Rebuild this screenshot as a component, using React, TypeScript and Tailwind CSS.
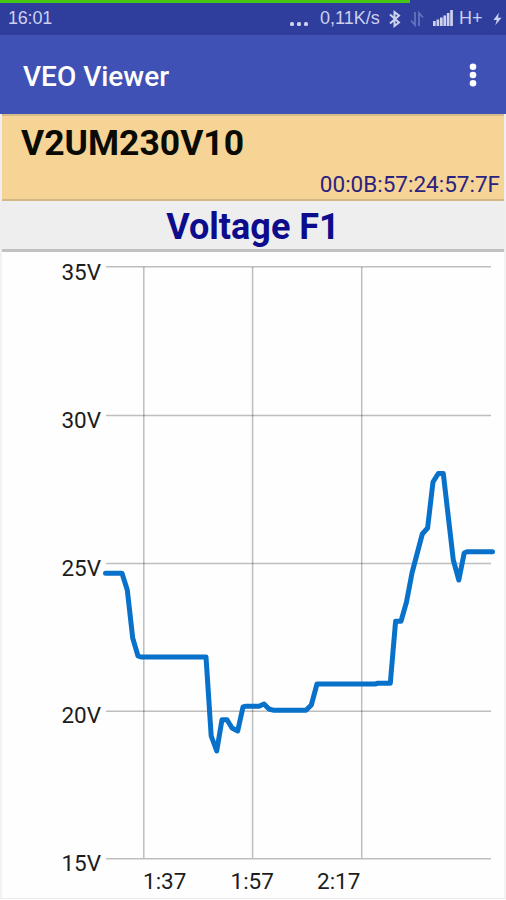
import React from 'react';

const yTicks = [
  { label: '35V', y: 266.8, baseline: 279.5 },
  { label: '30V', y: 415.5, baseline: 427.5 },
  { label: '25V', y: 563.5, baseline: 575.5 },
  { label: '20V', y: 711.2, baseline: 723 },
  { label: '15V', y: 858.7, baseline: 870.5 },
];

const xTicks = [
  { label: '1:37', x: 143.8, textX: 143 },
  { label: '1:57', x: 252.6, textX: 230.5 },
  { label: '2:17', x: 361.7, textX: 317 },
];

const voltage =
  '105.5,573.3 122,573.3 127.3,590 132.7,638 138,656 141,657 206,657 211.2,736 216.7,751 222,719.7 227,719.7 232,728 237.7,731 243,707 246,706.2 259,706.2 264,704 269,709 274,710.3 306,710.3 311.3,705 317,684 375,684 378,683.3 390.3,683.3 395.6,621.3 401,621.3 406.5,602 412,573 422.3,534 427.6,528 433,482 438.3,473.5 443.3,473.5 453.3,560 458.8,580 464.2,553 467,551.8 492.5,551.8';

const StatusBar = () => {
  return (
    <div className="relative h-[35px] bg-[#2f3e9d] text-[18px] text-[#ccd1ee]">
      <div className="absolute left-0 top-0 h-[3px] w-[410px] bg-[#43c614]" />
      <div className="flex h-full items-center justify-between pl-2 pr-[4px] pt-[2px] font-['Liberation_Sans',sans-serif]">
        <span className="tracking-[-0.2px]">16:01</span>
        <div className="flex items-center">
          <svg width="18" height="18" className="mr-[12px]" fill="currentColor">
            <rect x="0" y="12" width="4" height="4" rx="1.5" />
            <rect x="7" y="12" width="4" height="4" rx="1.5" />
            <rect x="14" y="12" width="4" height="4" rx="1.5" />
          </svg>
          <span className="w-[60px] whitespace-nowrap">0,11K/s</span>
          <svg
            width="14"
            height="18"
            viewBox="0 0 14 18"
            className="ml-[8px]"
            fill="none"
            stroke="currentColor"
            strokeWidth="2"
          >
            <path d="M2 4.5 L11 12.5 L6.5 16 V2 L11 5.5 L2 13.5" />
          </svg>
          <svg
            width="14"
            height="16"
            viewBox="0 0 14 16"
            className="ml-[8px] text-[#6974bd]"
            fill="none"
            stroke="currentColor"
            strokeWidth="1.7"
          >
            <path d="M5 1 V14 L1 9.5" />
            <path d="M9 15 V2 L13 6.5" />
          </svg>
          <svg
            width="20"
            height="17"
            className="mb-[2px] ml-[9px]"
            fill="currentColor"
          >
            <rect x="0" y="12" width="2.7" height="5" />
            <rect x="3.5" y="10.5" width="2.7" height="6.5" />
            <rect x="7" y="8.5" width="2.7" height="8.5" />
            <rect x="10.4" y="6.5" width="2.7" height="10.5" />
            <rect x="13.8" y="4" width="2.7" height="13" />
            <rect x="17.2" y="1" width="2.7" height="16" />
          </svg>
          <span className="ml-[6px] w-[24px]">H+</span>
          <svg
            width="9"
            height="14"
            viewBox="0 0 10 14"
            className="ml-[10px]"
            fill="currentColor"
          >
            <path d="M6.5 0 L0.5 8 H4.2 L2.5 14 L9.5 5.5 H5.6 Z" />
          </svg>
        </div>
      </div>
    </div>
  );
};

const Chart = () => {
  return (
    <svg
      width="506"
      height="648"
      viewBox="0 252 506 648"
      className="block font-[Roboto,sans-serif] text-[22.5px]"
    >
      <g stroke="#000" strokeOpacity="0.25" strokeWidth="1.5">
        {yTicks.map((t) => (
          <line key={t.label} x1="106" x2="491" y1={t.y} y2={t.y} />
        ))}
        {xTicks.map((t) => (
          <line key={t.label} x1={t.x} x2={t.x} y1="267" y2="858" />
        ))}
      </g>
      <g fill="#1c1c1c">
        {yTicks.map((t) => (
          <text key={t.label} x="101" y={t.baseline} textAnchor="end">
            {t.label}
          </text>
        ))}
        {xTicks.map((t) => (
          <text key={t.label} x={t.textX} y="889">
            {t.label}
          </text>
        ))}
      </g>
      <polyline
        points={voltage}
        fill="none"
        stroke="#0872cb"
        strokeWidth="5"
        strokeLinecap="round"
        strokeLinejoin="round"
      />
    </svg>
  );
};

const App = () => {
  return (
    <div className="h-[900px] w-[506px] overflow-hidden bg-white font-[Roboto,sans-serif]">
      <StatusBar />
      <div className="flex h-[79px] items-center justify-between bg-[#3f51b5] pl-[23px] pr-[29px] pt-[5px]">
        <h1 className="text-[28px] font-medium text-white">VEO Viewer</h1>
        <svg width="8" height="24" className="mb-[5px]" fill="#fff">
          <circle cx="4" cy="3.7" r="3.3" />
          <circle cx="4" cy="12" r="3.3" />
          <circle cx="4" cy="20.3" r="3.3" />
        </svg>
      </div>
      <div className="border-x-2 border-[#efefef]">
        <div className="h-[87px] border-b-2 border-t-2 border-b-[#d3b784] border-t-[#d5bc89] bg-[#f6d495]">
          <div className="pl-[19px] pt-[6px] text-[35.5px] font-bold leading-[42px] text-[#0b0b06]">
            V2UM230V10
          </div>
          <div className="pr-[4px] text-right text-[22.5px] leading-[40px] text-[#2b2180]">
            00:0B:57:24:57:7F
          </div>
        </div>
        <div className="h-[51px] border-b-[3px] border-[#c1c1c1] bg-[#eeeeee] text-center text-[36px] font-bold leading-[52px] text-[#0c0c8c]">
          Voltage F1
        </div>
      </div>
      <div className="h-[647px] overflow-hidden border-b border-[#ececec] bg-[linear-gradient(90deg,#f3f3f3_2px,#fefefe_2px,#fefefe_504px,#f3f3f3_504px)]">
        <Chart />
      </div>
    </div>
  );
};

export default App;
